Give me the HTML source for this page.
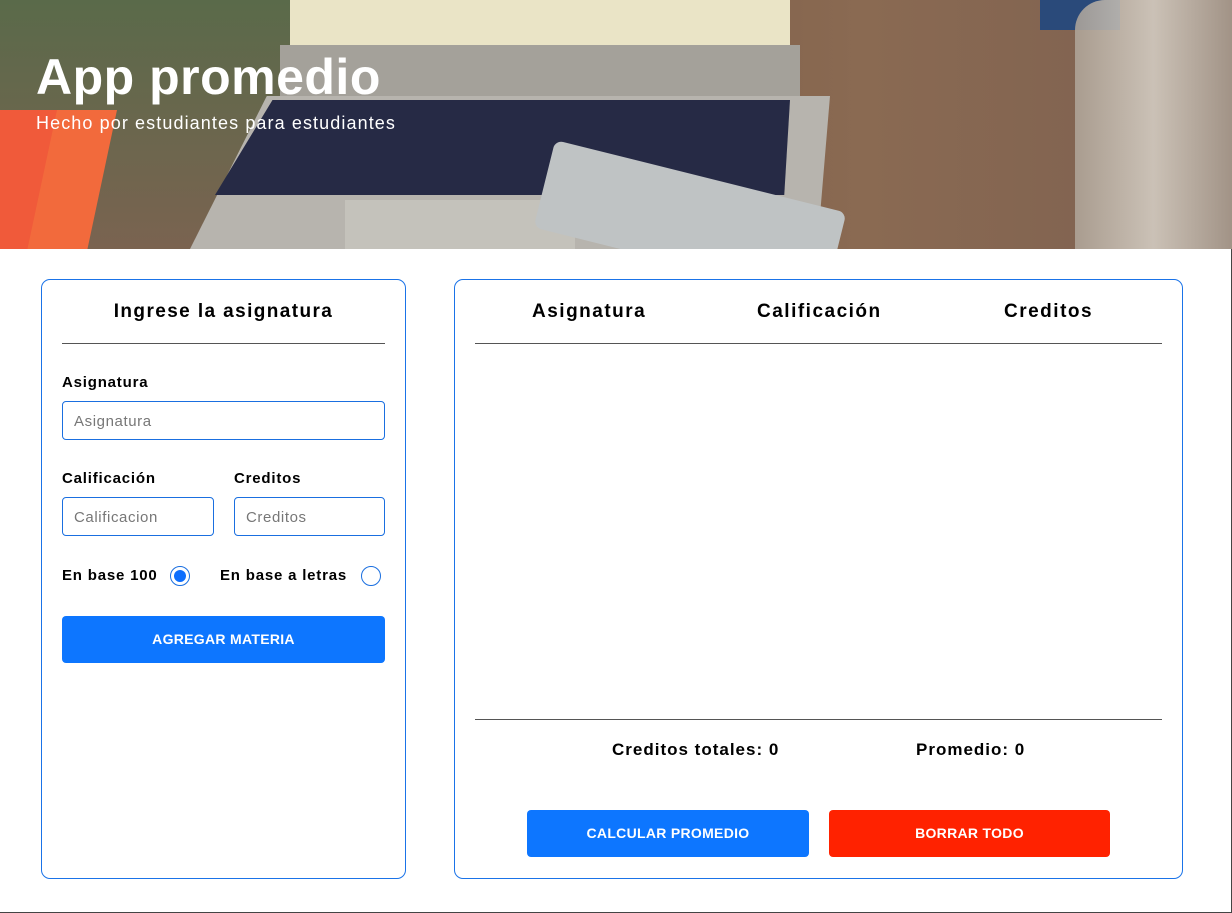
<!DOCTYPE html>
<html><head><meta charset="utf-8"><style>
*{box-sizing:border-box;margin:0;padding:0}
body{width:1232px;height:913px;overflow:hidden;background:#fff;font-family:"Liberation Sans",sans-serif;position:relative;border-right:1px solid #444;border-bottom:1px solid #444}
.hdr{position:absolute;left:0;top:0;width:1232px;height:249px;overflow:hidden;background:linear-gradient(90deg,#6b4a3a 0%,#7a5a45 40%,#8a6a52 70%,#7d6050 100%)}
.abs{position:absolute}
h1{position:absolute;left:36px;top:48px;color:#fff;font-size:50px;font-weight:bold;letter-spacing:0.5px}
.sub{position:absolute;left:36px;top:113px;color:#fff;font-size:18px;letter-spacing:1.1px}
.card{position:absolute;border:1px solid #1a73e8;border-radius:9px;background:#fff}
.lbl{position:absolute;font-weight:bold;font-size:15px;color:#000;letter-spacing:0.8px;top:0}
.inp{position:absolute;border:1px solid #1a6fe0;border-radius:4px;height:39px;color:#777;font-size:15px;padding:11px 0 0 11px;letter-spacing:0.6px}
.btn{position:absolute;border-radius:4px;color:#fff;font-weight:bold;font-size:14px;text-align:center;height:47px;line-height:47px;letter-spacing:0.3px}
.hr{position:absolute;height:1px;background:#555}
.th{position:absolute;font-weight:bold;font-size:19px;top:301px;letter-spacing:1.5px}
</style></head><body>
<div class="hdr">
 <div class="abs" style="left:0;top:0;width:320px;height:249px;background:linear-gradient(180deg,#5a6a4a,#7a6350)"></div>
 <div class="abs" style="left:-20px;top:110px;width:110px;height:160px;background:#f05a3a;transform:skewX(-12deg)"></div>
 <div class="abs" style="left:40px;top:110px;width:60px;height:160px;background:#f26a3c;transform:skewX(-12deg)"></div>
 <div class="abs" style="left:290px;top:0;width:500px;height:45px;background:#eae4c6"></div>
 <div class="abs" style="left:280px;top:45px;width:520px;height:55px;background:#a4a19a"></div>
 <div class="abs" style="left:190px;top:96px;width:640px;height:153px;background:#b7b4ae;clip-path:polygon(12% 0,100% 0,98% 100%,0 100%)"></div>
 <div class="abs" style="left:215px;top:100px;width:575px;height:95px;background:#262a45;clip-path:polygon(10% 0,100% 0,99% 100%,0 100%)"></div>
 <div class="abs" style="left:345px;top:200px;width:230px;height:49px;background:#c4c2bb"></div>
 <div class="abs" style="left:540px;top:175px;width:300px;height:90px;background:#bfc3c4;transform:rotate(14deg);border-radius:8px"></div>
 <div class="abs" style="left:1040px;top:0;width:80px;height:30px;background:#2a4a7a"></div>
 <div class="abs" style="left:1075px;top:0;width:157px;height:249px;background:linear-gradient(90deg,#b0a69a,#d8d2c8,#a89c90);opacity:.85;border-radius:30px 0 0 0"></div>
 <h1>App promedio</h1>
 <div class="sub">Hecho por estudiantes para estudiantes</div>
</div>

<div class="card" style="left:41px;top:279px;width:365px;height:600px"></div>
<div class="abs" style="left:41px;top:301px;width:365px;text-align:center;font-weight:bold;font-size:19px;letter-spacing:1.4px">Ingrese la asignatura</div>
<div class="hr" style="left:62px;top:343px;width:323px"></div>
<div class="lbl" style="left:62px;top:374px">Asignatura</div>
<div class="inp" style="left:62px;top:401px;width:323px">Asignatura</div>
<div class="lbl" style="left:62px;top:470px">Calificación</div>
<div class="lbl" style="left:234px;top:470px">Creditos</div>
<div class="inp" style="left:62px;top:497px;width:152px">Calificacion</div>
<div class="inp" style="left:234px;top:497px;width:151px">Creditos</div>
<div class="lbl" style="left:62px;top:567px">En base 100</div>
<div class="abs" style="left:170px;top:566px;width:20px;height:20px;border:1px solid #1a6fe0;border-radius:50%;padding:3px"><div style="width:12px;height:12px;border-radius:50%;background:#0d6efd"></div></div>
<div class="lbl" style="left:220px;top:567px">En base a letras</div>
<div class="abs" style="left:361px;top:566px;width:20px;height:20px;border:1px solid #1a6fe0;border-radius:50%"></div>
<div class="btn" style="left:62px;top:616px;width:323px;background:#0d76ff">AGREGAR MATERIA</div>

<div class="card" style="left:454px;top:279px;width:729px;height:600px"></div>
<div class="th" style="left:532px">Asignatura</div>
<div class="th" style="left:757px">Calificación</div>
<div class="th" style="left:1004px">Creditos</div>
<div class="hr" style="left:475px;top:343px;width:687px"></div>
<div class="hr" style="left:475px;top:719px;width:687px"></div>
<div class="abs" style="left:612px;top:740px;font-weight:bold;font-size:17px;letter-spacing:1px">Creditos totales: 0</div>
<div class="abs" style="left:916px;top:740px;font-weight:bold;font-size:17px;letter-spacing:1px">Promedio: 0</div>
<div class="btn" style="left:527px;top:810px;width:282px;background:#0d76ff">CALCULAR PROMEDIO</div>
<div class="btn" style="left:829px;top:810px;width:281px;background:#ff2200">BORRAR TODO</div>
</body></html>
